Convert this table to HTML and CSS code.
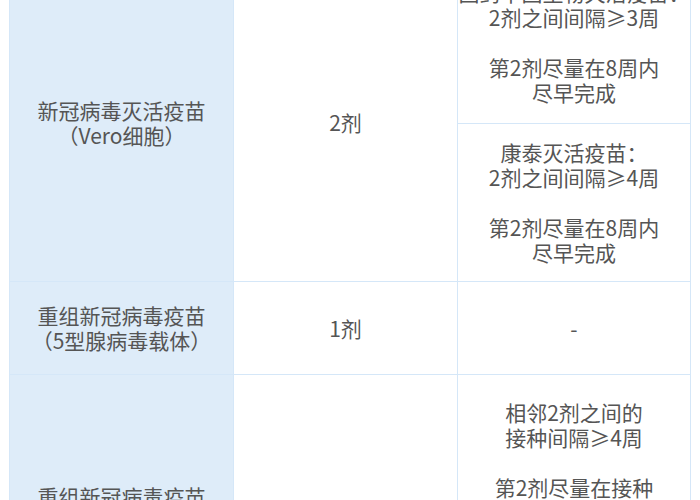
FILE: index.html
```html
<!DOCTYPE html>
<html lang="zh-CN">
<head>
<meta charset="utf-8">
<title>新冠疫苗接种间隔</title>
<link rel="stylesheet" href="styles.css">
</head>
<body>
<div class="wrap">
<table class="vac">
  <colgroup>
    <col class="c1"><col class="c2"><col class="c3">
  </colgroup>
  <tbody>
    <tr>
      <td class="name" rowspan="2">新冠病毒灭活疫苗<br>（Vero细胞）</td>
      <td class="dose" rowspan="2">2剂</td>
      <td class="note first"><span class="nowrap">国药中国生物灭活疫苗：</span><br>2剂之间间隔≥3周<br><br>第2剂尽量在8周内<br>尽早完成</td>
    </tr>
    <tr>
      <td class="note">康泰灭活疫苗：<br>2剂之间间隔≥4周<br><br>第2剂尽量在8周内<br>尽早完成</td>
    </tr>
    <tr class="r2">
      <td class="name">重组新冠病毒疫苗<br>（5型腺病毒载体）</td>
      <td class="dose">1剂</td>
      <td class="note">-</td>
    </tr>
    <tr class="r3">
      <td class="name">重组新冠病毒疫苗<br>（CHO细胞）</td>
      <td class="dose">3剂</td>
      <td class="note">相邻2剂之间的<br>接种间隔≥4周<br><br>第2剂尽量在接种<br>第1剂后8周内完成<br><br>第3剂尽量在接种<br>第1剂后6个月内<br>完成</td>
    </tr>
  </tbody>
</table>
</div>
</body>
</html>
```

FILE: styles.css
```css
html, body {
  margin: 0;
  padding: 0;
  background: #ffffff;
  overflow: hidden;
}
body {
  font-family: "Noto Sans CJK SC", "Noto Sans", sans-serif;
  color: #555555;
}
.wrap {
  padding-left: 9px;
  margin-top: -37px;
}
.vac {
  border-collapse: collapse;
  table-layout: fixed;
  width: 681px;
  font-size: 21px;
  line-height: 25px;
}
.c1 { width: 224px; }
.c2 { width: 224px; }
.c3 { width: 233px; }
.vac td {
  border: 1px solid #d5e7f8;
  text-align: center;
  vertical-align: middle;
  padding: 16px 6px;
}
.vac td.name {
  background: #deecf9;
}
.vac td.first {
  padding-bottom: 18px;
}
.nowrap {
  white-space: nowrap;
  display: inline-block;
  margin: 0 -10px;
}
.r2 td {
  padding-top: 21px;
  padding-bottom: 21px;
}
.r3 td.note {
  padding-top: 25px;
  padding-bottom: 18px;
}
```
